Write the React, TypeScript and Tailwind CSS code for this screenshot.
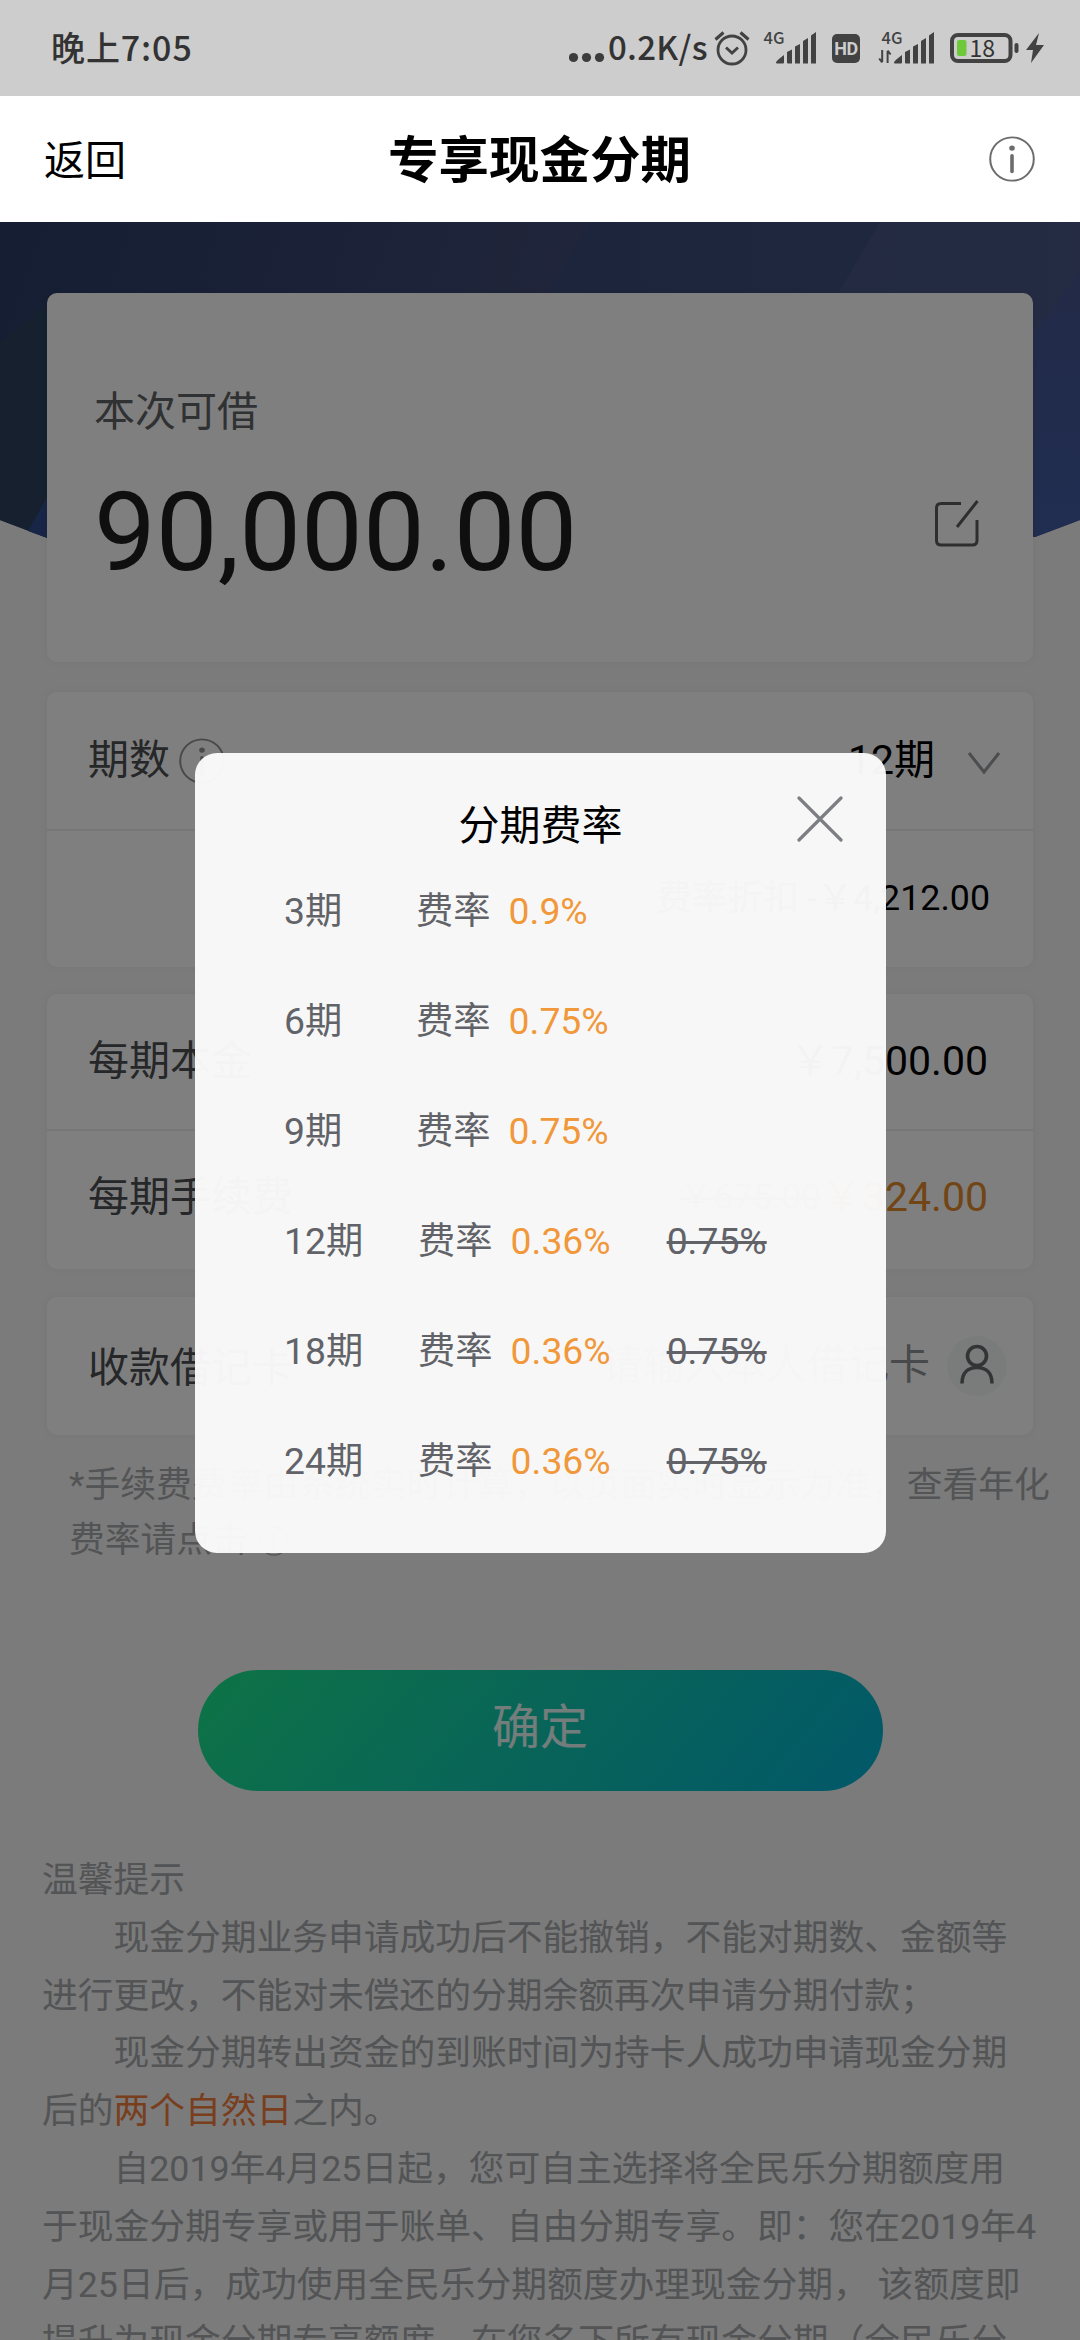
import React from "react";

const font = "font-['Roboto','Noto_Sans_CJK_SC',sans-serif]";

function InfoIcon({ className }: { className: string }) {
  return (
    <svg viewBox="0 0 46 48" className={className} fill="none" preserveAspectRatio="none">
      <ellipse cx="23" cy="24" rx="21.8" ry="22.6" stroke="currentColor" strokeWidth="2" />
      <circle cx="23" cy="12.6" r="2.8" fill="currentColor" />
      <path d="M23 20.5v16.500" stroke="currentColor" strokeWidth="3.6" strokeLinecap="round" />
    </svg>
  );
}

function Signal({ data }: { data?: boolean }) {
  return (
    <svg viewBox="0 0 56 36" className="h-[36px] w-[56px] overflow-visible text-[#424242]">
      <text x="0.500" y="13" fontSize="16.500" fontWeight="500" fill="currentColor" fontFamily="Noto Sans CJK SC">4G</text>
      {data && (
        <path d="M1.200 19v12M1.200 31.500l-3-4M6.600 32V20M6.600 19.500l3 4" stroke="currentColor" strokeWidth="2" fill="none" />
      )}
      <path
        fill="currentColor"
        d="M13 31.5q0-1.500 8-7.500v7.500q0 1-1 1h-6q-1 0-1-1zM24 21l5-2.500v14h-4q-1 0-1-1zM32 15.500l5-2.500v19.500h-5zM40 10l5-3v25.500h-5zM48 4.500l5-3.500v31.500h-5z"
      />
    </svg>
  );
}

function StatusBar() {
  return (
    <div className="flex h-[96px] shrink-0 items-start justify-between bg-[#cdcdcd] pl-[51px] pr-[35px] text-[#333]">
      <div className="mt-[27px] font-['Noto_Sans_CJK_SC',sans-serif] text-[34px] font-medium leading-[40px] tracking-[0.9px]">晚上7:05</div>
      <div className="mt-[31px] flex h-[36px] items-start">
        <svg viewBox="0 0 36 36" className="h-[36px] w-[36px] text-[#3c3c3c]" fill="currentColor">
          <circle cx="4.500" cy="26.500" r="4.600" /><circle cx="17.500" cy="26.500" r="4.600" /><circle cx="30.500" cy="26.500" r="4.600" />
        </svg>
        <div className="-mt-[5px] ml-[3px] w-[100px] whitespace-nowrap font-['Noto_Sans_CJK_SC',sans-serif] text-[33px] font-medium leading-[40px] tracking-[0.3px]">0.2K/s</div>
        <svg viewBox="0 0 36 36" className="ml-[6px] h-[36px] w-[36px] text-[#424242]" fill="none" stroke="currentColor" strokeWidth="2.800">
          <circle cx="18" cy="19" r="14" />
          <path d="M12 16.500l6 5.500 6-5.500" />
          <path d="M1.500 8.500l8-7M34.500 8.500l-8-7" strokeWidth="3.200" />
        </svg>
        <div className="ml-[13px]"><Signal /></div>
        <div className="ml-[13px] mt-[3px] flex h-[29px] w-[28px] items-center justify-center rounded-[5px] bg-[#424242] font-['Roboto'] text-[18px] font-bold tracking-[-0.5px] text-[#cdcdcd]">HD</div>
        <div className="ml-[21px]"><Signal data /></div>
        <svg viewBox="0 0 96 36" className="ml-[12px] h-[36px] w-[96px]">
          <rect x="3" y="4" width="58.500" height="26" rx="6" fill="none" stroke="#424242" strokeWidth="4" />
          <rect x="8" y="9" width="9.500" height="16" rx="2" fill="#6dc93a" />
          <rect x="65.500" y="12" width="4" height="10" rx="2" fill="#424242" />
          <path d="M90 2L77 19h7l-2 13L95 14h-8z" fill="#424242" />
          <text x="20.500" y="25.500" fontSize="23" fill="#333" fontFamily="Noto Sans CJK SC">18</text>
        </svg>
      </div>
    </div>
  );
}

function TitleBar() {
  return (
    <div className="flex h-[126px] shrink-0 items-center justify-between bg-white pl-[44px] pr-[45px] text-black">
      <div className="w-[120px] pt-[4px] text-[41px] leading-[60px]">返回</div>
      <div className="pt-[4px] text-[50.500px] font-bold leading-[60px]">专享现金分期</div>
      <div className="flex w-[120px] justify-end"><InfoIcon className="h-[46px] w-[46px] text-[#6a6c6d]" /></div>
    </div>
  );
}

function Hero() {
  return (
    <svg viewBox="0 0 1080 330" className="absolute left-0 top-0 h-[330px] w-full">
      <defs>
        <linearGradient id="hero" x1="0" y1="0" x2="1" y2="0.100">
          <stop offset="0" stopColor="#2a3c66" />
          <stop offset="0.500" stopColor="#3f4a74" />
          <stop offset="1" stopColor="#48568e" />
        </linearGradient>
        <linearGradient id="band" x1="0" y1="0" x2="1" y2="0">
          <stop offset="0" stopColor="#384a78" />
          <stop offset="1" stopColor="#435282" />
        </linearGradient>
        <linearGradient id="edge" x1="0" y1="0" x2="0" y2="1">
          <stop offset="0" stopColor="#45548e" />
          <stop offset="1" stopColor="#415ca4" />
        </linearGradient>
      </defs>
      <path d="M0 0H1080V298L1035 315H45L0 298Z" fill="url(#hero)" />
      <path d="M590 0H1080V100L1000 120H520Z" fill="url(#band)" />
      <path d="M880 0H1080V55L1030 180L810 120Z" fill="#4a5988" opacity=".7" />
      <path d="M1080 50V298L1035 315V110Z" fill="url(#edge)" />
      <path d="M0 298V120L50 80V317Z" fill="#2c415f" />
      <path d="M28 309L50 270V317Z" fill="#2f4a8c" />
    </svg>
  );
}

const card = "rounded-[10px] bg-white shadow-[0_0_8px_rgba(0,0,0,0.05)]";
const row = "flex items-center justify-between";

function Content() {
  return (
    <div className="relative flex flex-1 flex-col bg-[#f6f6f6] px-[47px] pt-[71px]">
      <Hero />
      <section className={`${card} relative flex h-[369px] shrink-0 flex-col pl-[47px] pr-[53px]`}>
        <div className="mt-[89px] text-[41px] leading-[60px] text-[#606265]">本次可借</div>
        <div className="mt-[31px] flex items-center justify-between">
          <div className="text-[110px] leading-[120px] text-[#1e1e1e]">90,000.00</div>
          <svg viewBox="0 0 46 50" className="mb-[20px] h-[50px] w-[46px]" fill="none" stroke="#5a5c5e" strokeWidth="3">
            <path d="M27 5.500H7Q2.500 5.500 2.500 10V42.500Q2.500 47 7 47H38.500Q43 47 43 42.500V22" />
            <path d="M43.500 3L23 29" />
          </svg>
        </div>
      </section>

      <section className={`${card} mt-[30px] flex h-[275px] shrink-0 flex-col`}>
        <div className={`${row} h-[139px] border-b-2 border-[#ececec] pl-[41px] pr-[32px]`}>
          <div className="flex items-center text-[41px] text-[#4c4e51]">
            期数
            <InfoIcon className="ml-[9px] h-[46px] w-[46px] text-[#909295]" />
          </div>
          <div className="flex items-center gap-[32px] text-[41px] text-black">
            12期
            <svg viewBox="0 0 34 24" className="mt-[4px] h-[24px] w-[34px]" fill="none" stroke="#989a9e" strokeWidth="3"><path d="M2 2L17 21L32 2" /></svg>
          </div>
        </div>
        <div className="flex h-[136px] items-center justify-end pr-[43px] text-[35.750px]">
          <span className="text-[#4c4e51]">费率折扣</span>
          <span className="ml-[8px] text-black">-￥4,212.00</span>
        </div>
      </section>

      <section className={`${card} mt-[27px] flex h-[275px] shrink-0 flex-col text-[41px]`}>
        <div className={`${row} h-[137px] border-b-2 border-[#ececec] pl-[41px] pr-[45px]`}>
          <div className="text-[#4c4e51]">每期本金</div>
          <div className="text-black">￥7,500.00</div>
        </div>
        <div className={`${row} h-[138px] pb-[4px] pl-[41px] pr-[45px]`}>
          <div className="text-[#4c4e51]">每期手续费</div>
          <div className="flex items-center text-[#e38a2c]">
            <span className="text-[35px] text-[#909295] line-through">￥675.00</span>￥324.00
          </div>
        </div>
      </section>

      <section className={`${card} ${row} mt-[28px] h-[138px] shrink-0 pl-[41px] pr-[26px] text-[41px]`}>
        <div className="pt-[6px] text-[#4c4e51]">收款借记卡</div>
        <div className="flex items-center">
          <span className="text-[#909295]">请输入本人借记卡</span>
          <svg viewBox="0 0 60 60" className="ml-[17px] h-[60px] w-[60px]" fill="none" stroke="#66686a" strokeWidth="3.600">
            <circle cx="30" cy="30" r="30" fill="#f4f7f6" stroke="none" />
            <circle cx="30" cy="20" r="9.500" />
            <path d="M15 47.500C15 37 21 31.500 30 31.500S45 37 45 47.500" />
          </svg>
        </div>
      </section>

      <div className="ml-[22px] mt-[23px] w-[1000px] shrink-0 whitespace-nowrap text-[35.750px] leading-[55px] text-[#a6a8ab]">
        <div>*手续费费率由系统实时计算，以页面实时显示为准，查看年化</div>
        <div className="flex items-center">费率请点击<InfoIcon className="ml-[12px] h-[30px] w-[28px]" /></div>
      </div>

      <button className="mx-auto mt-[102px] h-[121px] w-[685px] shrink-0 rounded-full bg-[linear-gradient(130deg,#1ce68c,#12ccae_45%,#04b0d2)] pb-[6px] text-[48px] leading-[60px] text-white/90">确定</button>

      <div className="-ml-[5px] mt-[61px] w-[1010px] shrink-0 whitespace-nowrap text-[35.750px] leading-[57.800px] text-[#a6a8ab]">
        <p>温馨提示</p>
        <p className="indent-[2em]">现金分期业务申请成功后不能撤销，不能对期数、金额等</p>
        <p>进行更改，不能对未偿还的分期余额再次申请分期付款；</p>
        <p className="indent-[2em]">现金分期转出资金的到账时间为持卡人成功申请现金分期</p>
        <p>后的<span className="text-[#f07c3c]">两个自然日</span>之内。</p>
        <p className="indent-[2em]">自2019年4月25日起，您可自主选择将全民乐分期额度用</p>
        <p>于现金分期专享或用于账单、自由分期专享。即：您在2019年4</p>
        <p>月25日后，成功使用全民乐分期额度办理现金分期， 该额度即</p>
        <p>提升为现金分期专享额度，在您名下所有现金分期（全民乐分</p>
      </div>
    </div>
  );
}

const rates = [
  { term: "3期", rate: "0.9%" },
  { term: "6期", rate: "0.75%" },
  { term: "9期", rate: "0.75%" },
  { term: "12期", rate: "0.36%", old: "0.75%" },
  { term: "18期", rate: "0.36%", old: "0.75%" },
  { term: "24期", rate: "0.36%", old: "0.75%" },
];

function RateDialog() {
  return (
    <div className="absolute left-[195px] top-[531px] h-[800px] w-[691px] rounded-[22px] bg-[#fbfbfb]/97">
      <div className="mt-[43px] text-center text-[41px] leading-[60px] text-black">分期费率</div>
      <svg viewBox="0 0 46 46" className="absolute right-[43px] top-[43px] h-[46px] w-[46px]" fill="none" stroke="#7c7e83" strokeWidth="3.200" strokeLinecap="round">
        <path d="M2 2L44 44M44 2L2 44" />
      </svg>
      <ul className="mt-px">
        {rates.map((r) => (
          <li key={r.term} className="flex h-[110px] items-center pl-[89px] text-[37.300px] text-[#616368]">
            <span className={r.old ? "w-[134px]" : "w-[132px]"}>{r.term}</span>
            <span>费率</span>
            <span className="ml-[18px] text-[#f0983a]">{r.rate}</span>
            {r.old && <span className="ml-[56px] line-through decoration-[2.750px]">{r.old}</span>}
          </li>
        ))}
      </ul>
    </div>
  );
}

export default function App() {
  return (
    <div className={`flex h-[2340px] w-[1080px] flex-col overflow-hidden ${font}`}>
      <StatusBar />
      <TitleBar />
      <main className="relative flex h-[2118px] shrink-0 flex-col overflow-hidden">
        <Content />
        <div className="absolute inset-0 bg-black/50" />
        <RateDialog />
      </main>
    </div>
  );
}
